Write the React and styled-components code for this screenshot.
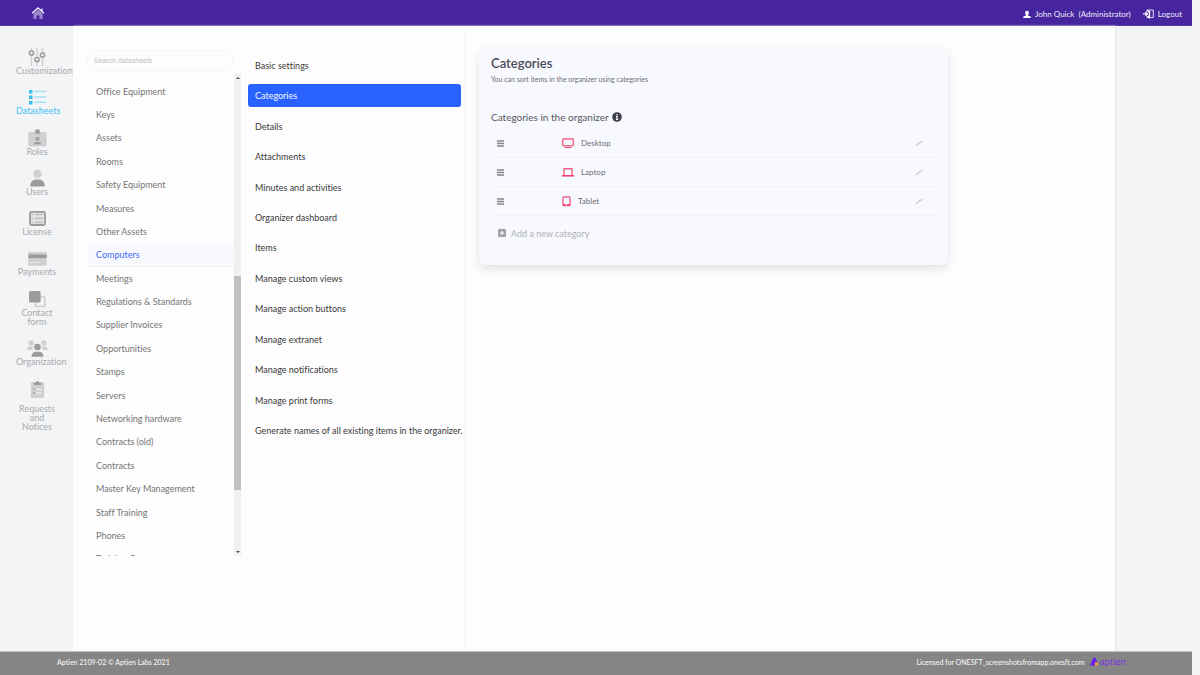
import React from 'react'
import styled, { createGlobalStyle } from 'styled-components'

const GlobalStyle = createGlobalStyle`
  * {
    box-sizing: border-box;
  }
  body {
    margin: 0;
    background: #f3f4f6;
    font-family: Lato, "Open Sans", sans-serif;
    font-size: 8px;
    font-variant-ligatures: none;
    color: #6e6e6e;
  }
  a {
    color: inherit;
    text-decoration: none;
  }
  button, input {
    font-family: inherit;
    font-size: inherit;
    color: inherit;
    border: 0;
    padding: 0;
    background: none;
  }
  h1, h2, p, ul {
    margin: 0;
    padding: 0;
    list-style: none;
  }
  svg {
    display: block;
    flex: none;
  }
`

const Page = styled.div`
  display: flex;
  flex-direction: column;
  min-height: 100vh;
  padding-right: 8px;
`

const Header = styled.header`
  display: flex;
  align-items: center;
  height: 26px;
  padding: 1px 10px 0 31px;
  background: #46259e;
  border-bottom: 1px solid #5236a8;
  color: #f1edfa;
`

const HeaderLinks = styled.div`
  display: flex;
  align-items: center;
  gap: 12px;
  margin-left: auto;
`

const HeaderLink = styled.a`
  display: flex;
  align-items: center;
  gap: 4px;
  line-height: 12px;
  padding-top: 2px;
  white-space: pre;
`

const Body = styled.div`
  display: flex;
  flex: 1;
`

const Sidebar = styled.nav`
  flex: none;
  width: 73px;
  padding: 22px 15px 0 16px;
  font-size: 9px;
`

const SidebarList = styled.ul`
  display: flex;
  flex-direction: column;
  justify-content: space-between;
  height: 383px;
`

const SidebarLink = styled.a`
  display: flex;
  flex-direction: column;
  line-height: 9px;
  color: ${props => props.$active ? '#43c3f0' : '#a9aaac'};

  svg {
    align-self: center;
    margin-bottom: ${props => props.$tall ? '7px' : '0'};
  }
  span {
    text-align: center;
  }
`

const Content = styled.main`
  display: flex;
  flex: 1;
  margin-right: 77px;
  background: #fdfdfd;
  box-shadow: 1px 0 2px #e6e7ea;
`

const Datasheets = styled.section`
  width: 154px;
  margin: 24px 7px 0 14px;
  font-size: 9px;
`

const Search = styled.input`
  display: block;
  width: 146px;
  height: 21px;
  padding: 0 6px;
  border: 1px solid #f6f6f7;
  border-radius: 10px;
  font-family: "Liberation Sans", Arial, sans-serif;
  font-size: 7px;

  &::placeholder {
    color: #bdbdbd;
  }
`

const Scroller = styled.div`
  display: flex;
  height: 482px;
  margin-top: 3px;
  overflow: hidden;
`

const DatasheetList = styled.ul`
  display: grid;
  grid-auto-rows: 1fr;
  flex: 1;
  height: 491px;
  margin: 6px 0 0 1px;
`

const DatasheetLink = styled.a`
  display: flex;
  align-items: center;
  height: 100%;
  padding-left: 8px;
  background: ${props => props.$active ? '#f8f9fe' : 'none'};
  color: ${props => props.$active ? '#3d68f5' : '#757575'};
  border-bottom: 1px solid ${props => props.$active ? '#f0f1f5' : 'transparent'};
`

const Scrollbar = styled.div`
  display: flex;
  flex-direction: column;
  justify-content: space-between;
  align-items: center;
  width: 7px;
  padding: 3px 0;
  background: #f0f0f0;
`

const Thumb = styled.div`
  width: 7px;
  height: 214px;
  margin-top: 136px;
  background: #c1c1c1;
`

const Settings = styled.nav`
  width: 217px;
  padding: 24px 3px 0 0;
  border-right: 1px solid #f7f7f8;
  font-size: 9px;
`

const SettingsList = styled.ul`
  display: grid;
  grid-template-columns: minmax(0, 1fr);
  grid-auto-rows: 1fr;
  align-items: center;
  height: 396px;
`

const SettingsLink = styled.a`
  display: flex;
  align-items: center;
  height: 23px;
  padding-left: 7px;
  border-radius: 3px;
  white-space: nowrap;
  background: ${props => props.$active ? '#2962ff' : 'none'};
  color: ${props => props.$active ? '#f4f7ff' : '#3a3a3a'};
`

const Card = styled.section`
  flex: 0 1 469px;
  align-self: flex-start;
  margin: 21px 0 0 14px;
  padding: 7px 12px 22px 12px;
  border-radius: 7px;
  background: #f8f9fe;
  box-shadow: 0 4px 8px rgba(50, 55, 75, 0.13);
  color: #6b6c74;
`

const Title = styled.h1`
  font-size: 13px;
  line-height: 18px;
  font-weight: 600;
  color: #484a58;
`

const Subtitle = styled.p`
  font-size: 7px;
  line-height: 14px;
`

const GroupTitle = styled.h2`
  display: flex;
  align-items: center;
  gap: 3px;
  margin: 24px 0 5px;
  font-size: 10px;
  line-height: 14px;
  font-weight: 400;
  color: #55565f;
`

const CategoryRow = styled.li`
  display: flex;
  align-items: center;
  height: 29px;
  padding: 0 13px 0 6px;
  border-bottom: 1px solid #f1f2f5;
`

const CategoryName = styled.span`
  display: flex;
  flex: 1;
  align-items: center;
  gap: 7px;
  margin-left: 58px;
`

const IconButton = styled.button`
  display: flex;
`

const AddButton = styled.button`
  display: flex;
  align-items: center;
  gap: 5px;
  height: 20px;
  margin: 7px 0 0 7px;
  font-size: 9px;
  color: #aeb0b6;
`

const Footer = styled.footer`
  display: flex;
  align-items: center;
  height: 24px;
  padding: 0 66px 4px 57px;
  background: #858585;
  border-top: 1px solid #c4c4c5;
  color: #f5f5f5;
  font-size: 7px;
  font-weight: 500;
`

const License = styled.span`
  margin-left: auto;
`

const Brand = styled.a`
  display: flex;
  align-items: center;
  margin-left: 6px;
  font-family: "Open Sans", sans-serif;
  font-size: 9px;
  line-height: 14px;
  font-weight: 400;
  color: #7a2be8;
`

const icons = {
  sliders: <>
    <path d="M3.500 0v18M9 0v18M14.500 0v18" stroke="#cfd0d1" strokeWidth="1.500" />
    <g fill="#f3f4f6" stroke="#9b9b9b" strokeWidth="1.500">
      <circle cx="3.500" cy="5" r="2.100" />
      <circle cx="9" cy="11.500" r="2.100" />
      <circle cx="14.500" cy="7" r="2.100" />
    </g>
  </>,
  list: <>
    <path d="M1 2h3.500v3.500H1zM1 7.500h3.500V11H1zM1 13h3.500v3.500H1z" fill="#35c0ee" />
    <path d="M7 3.500h10.500M7 9h10.500M7 14.300h10.500" stroke="#a4dff5" strokeWidth="1.500" strokeLinecap="round" />
  </>,
  badge: <>
    <rect x="0.300" y="3" width="18.400" height="14.500" rx="1" fill="#cfd0d1" />
    <rect x="7.300" y="0.500" width="4.400" height="4.200" rx="0.800" fill="#9b9b9b" />
    <circle cx="9.500" cy="10" r="2" fill="#9b9b9b" />
    <path d="M6 15.300c0-1.400 1-2.300 2.200-2.300h2.600c1.200 0 2.200.9 2.200 2.300z" fill="#9b9b9b" />
  </>,
  user: <>
    <circle cx="9.500" cy="5" r="4.300" fill="#cfd0d1" />
    <path d="M2.300 17.500v-1C2.300 13 5 10.500 8 10.500h3c3 0 5.700 2.500 5.700 6v1z" fill="#9b9b9b" />
  </>,
  table: <>
    <rect x="2" y="2.800" width="15" height="13.200" rx="1.500" fill="#e4e5e6" stroke="#9b9b9b" strokeWidth="1.800" />
    <path d="M7 5.500h8M7 9.400h8M7 13.300h8M3.500 5.500h2M3.500 9.400h2M3.500 13.300h2" stroke="#bfc0c1" strokeWidth="1.700" />
  </>,
  card: <>
    <rect x="0.300" y="3" width="18.400" height="13.800" rx="1.300" fill="#cfd0d1" />
    <path d="M0.300 5.500h18.400v3.700H0.300z" fill="#9b9b9b" />
    <path d="M2.500 13.500h2.700M6.500 13.500h4.500" stroke="#f0f0f0" strokeWidth="1" />
  </>,
  copy: <>
    <rect x="7.300" y="7" width="9.500" height="9.500" rx="0.800" fill="none" stroke="#cfd0d1" strokeWidth="1.600" />
    <rect x="1" y="1" width="11.600" height="11.600" rx="1.600" fill="#9b9b9b" />
  </>,
  group: <>
    <g fill="#cfd0d1">
      <circle cx="3.200" cy="4" r="2.700" />
      <circle cx="15.800" cy="4" r="2.700" />
      <path d="M-.8 11c0-2.500 1.300-3.500 3-3.500h2.800L4.500 11zM19.800 11c0-2.500-1.300-3.500-3-3.500H14L14.500 11z" />
    </g>
    <circle cx="9.500" cy="8" r="3.300" fill="#9b9b9b" />
    <path d="M3.500 17.700c0-3 1.800-5 4-5h4c2.200 0 4 2 4 5z" fill="#9b9b9b" />
  </>,
  clipboard: <>
    <rect x="2.800" y="3" width="13.400" height="16" rx="1.500" fill="#cfd0d1" />
    <path d="M5.800 6V3.700h2a1.700 1.700 0 0 1 3.400 0h2V6z" fill="#9b9b9b" />
    <path d="M5.300 10.300h1.500M5.300 14h1.500" stroke="#9b9b9b" strokeWidth="1.300" />
    <path d="M8.300 10.300h5.400M8.300 14h5.400" stroke="#fafafa" strokeWidth="1" />
  </>,
}

const sidebarItems = [
  { icon: 'sliders', label: 'Customization' },
  { icon: 'list', label: 'Datasheets', active: true },
  { icon: 'badge', label: 'Roles' },
  { icon: 'user', label: 'Users' },
  { icon: 'table', label: 'License' },
  { icon: 'card', label: 'Payments' },
  { icon: 'copy', label: 'Contact form' },
  { icon: 'group', label: 'Organization' },
  { icon: 'clipboard', label: 'Requests and Notices', tall: true },
]

const datasheets = [
  'Office Equipment', 'Keys', 'Assets', 'Rooms', 'Safety Equipment', 'Measures',
  'Other Assets', 'Computers', 'Meetings', 'Regulations & Standards',
  'Supplier Invoices', 'Opportunities', 'Stamps', 'Servers', 'Networking hardware',
  'Contracts (old)', 'Contracts', 'Master Key Management', 'Staff Training',
  'Phones', 'Training Courses',
]

const settings = [
  'Basic settings', 'Categories', 'Details', 'Attachments', 'Minutes and activities',
  'Organizer dashboard', 'Items', 'Manage custom views', 'Manage action buttons',
  'Manage extranet', 'Manage notifications', 'Manage print forms',
  'Generate names of all existing items in the organizer.',
]

const categories = [
  {
    name: 'Desktop',
    width: 12,
    icon: <>
      <rect x="0.700" y="1" width="10.600" height="6.600" rx="0.700" fill="none" stroke="#f26286" strokeWidth="1.400" />
      <path d="M2.500 9.500h7" stroke="#f26286" strokeWidth="1.400" />
    </>,
  },
  {
    name: 'Laptop',
    width: 12,
    icon: <>
      <path d="M2 8V1.700h8V8" fill="none" stroke="#f26286" strokeWidth="1.400" />
      <path d="M0 8.800h12" stroke="#ee4470" strokeWidth="1.600" />
    </>,
  },
  {
    name: 'Tablet',
    width: 9,
    icon: <>
      <rect x="1" y="1" width="7" height="8.600" rx="0.700" fill="none" stroke="#f26286" strokeWidth="1.400" />
      <path d="M1 8.800h2.800M5.200 8.800h2.800" stroke="#ee4470" strokeWidth="1.800" />
    </>,
  },
]

const HomeIcon = () => (
  <svg width="14" height="12" viewBox="0 0 14 12">
    <path d="M2.500 6.500L7 2.700l4.500 3.800V12h-3V8.500h-3V12h-3z" fill="#9c88cf" />
    <path d="M1 6.300L7 1l6 5.300M11 1.500v2.500" fill="none" stroke="#f0ecfa" strokeWidth="1.400" />
  </svg>
)

const PersonIcon = () => (
  <svg width="8" height="8" viewBox="0 0 8 8">
    <path d="M4 .8c1.200 0 1.900.9 1.900 2 0 .9-.4 1.600-.9 2v.7l2.700 1V8H.3V6.500l2.700-1v-.7c-.5-.4-.9-1.100-.9-2C2.100 1.700 2.800.8 4 .8z" fill="#fff" />
  </svg>
)

const LogoutIcon = () => (
  <svg width="11" height="10" viewBox="0 0 11 10">
    <path d="M4 3V1h6.300v7.500H7.500M4 7v1.500h2" fill="none" stroke="#e9e3f7" strokeWidth="1" />
    <path d="M4.500 1l2.700 1.200V10L4.500 8.500V7l1.300-.8V3.600L4.500 2.800z" fill="#fff" />
    <path d="M0 4.900h4.500M2.500 3l2 1.900-2 1.900" fill="none" stroke="#fff" strokeWidth="1.200" />
  </svg>
)

const App = () => {
  return (
    <Page>
      <GlobalStyle />
      <Header>
        <a href="#home" aria-label="Home"><HomeIcon /></a>
        <HeaderLinks>
          <HeaderLink href="#profile"><PersonIcon />{'John Quick  (Administrator)'}</HeaderLink>
          <HeaderLink href="#logout"><LogoutIcon />Logout</HeaderLink>
        </HeaderLinks>
      </Header>
      <Body>
        <Sidebar>
          <SidebarList>
            {sidebarItems.map(item => (
              <li key={item.icon}>
                <SidebarLink href={`#${item.icon}`} $active={item.active} $tall={item.tall}>
                  <svg width="19" height="18" viewBox="0 0 19 18" overflow="visible">{icons[item.icon]}</svg>
                  <span>{item.label}</span>
                </SidebarLink>
              </li>
            ))}
          </SidebarList>
        </Sidebar>
        <Content>
          <Datasheets>
            <Search type="search" placeholder="Search datasheets" aria-label="Search datasheets" />
            <Scroller>
              <DatasheetList>
                {datasheets.map(name => (
                  <li key={name}>
                    <DatasheetLink href="#datasheet" $active={name === 'Computers'}>{name}</DatasheetLink>
                  </li>
                ))}
              </DatasheetList>
              <Scrollbar>
                <svg width="4" height="2" viewBox="0 0 4 2"><path d="M0 2l2-2 2 2z" fill="#505050" /></svg>
                <Thumb />
                <svg width="4" height="2" viewBox="0 0 4 2"><path d="M0 0l2 2 2-2z" fill="#505050" /></svg>
              </Scrollbar>
            </Scroller>
          </Datasheets>
          <Settings>
            <SettingsList>
              {settings.map(name => (
                <li key={name}>
                  <SettingsLink href="#setting" $active={name === 'Categories'}>{name}</SettingsLink>
                </li>
              ))}
            </SettingsList>
          </Settings>
          <Card>
            <Title>Categories</Title>
            <Subtitle>You can sort items in the organizer using categories</Subtitle>
            <GroupTitle>
              Categories in the organizer
              <svg width="10" height="10" viewBox="0 0 10 10">
                <circle cx="5" cy="5" r="4.800" fill="#3f414d" />
                <path d="M5 2v1.400M4 4.700h1v2.600M3.900 7.500h2.300" fill="none" stroke="#fff" strokeWidth="1.200" />
              </svg>
            </GroupTitle>
            <ul>
              {categories.map(category => (
                <CategoryRow key={category.name}>
                  <svg width="7" height="7" viewBox="0 0 7 7">
                    <path d="M0 1h7M0 3.500h7M0 6h7" stroke="#85868d" strokeWidth="1.300" />
                  </svg>
                  <CategoryName>
                    <svg width={category.width} height="11" viewBox={`0 0 ${category.width} 11`}>{category.icon}</svg>
                    {category.name}
                  </CategoryName>
                  <IconButton type="button" aria-label={`Edit ${category.name}`}>
                    <svg width="8" height="7" viewBox="0 0 8 7">
                      <path d="M0 6.500l1-2L6 .8 8 .5 7.300 2.300 2 6z" fill="#d6d7d9" />
                    </svg>
                  </IconButton>
                </CategoryRow>
              ))}
            </ul>
            <AddButton type="button">
              <svg width="8" height="8" viewBox="0 0 8 8">
                <rect width="8" height="8" rx="1" fill="#a0a1a7" />
                <path d="M4 2v4M2 4h4" stroke="#f8f9fe" strokeWidth="1.200" />
              </svg>
              Add a new category
            </AddButton>
          </Card>
        </Content>
      </Body>
      <Footer>
        <span>Aptien 2109-02 © Aptien Labs 2021</span>
        <License>Licensed for ONESFT_screenshotsfromapp.onesft.com</License>
        <Brand href="#aptien">
          <svg width="9" height="9" viewBox="0 0 9 9">
            <path d="M.3 7.500L3.300 1C4 0 5 .2 5.500 1L7.500 6v2.500H1C.3 8.500 0 8 .3 7.500z" fill="#6a1ff0" />
            <rect x="5" y="5.500" width="2.800" height="3" fill="#f7b52a" />
          </svg>
          aptien
        </Brand>
      </Footer>
    </Page>
  )
}

export default App
